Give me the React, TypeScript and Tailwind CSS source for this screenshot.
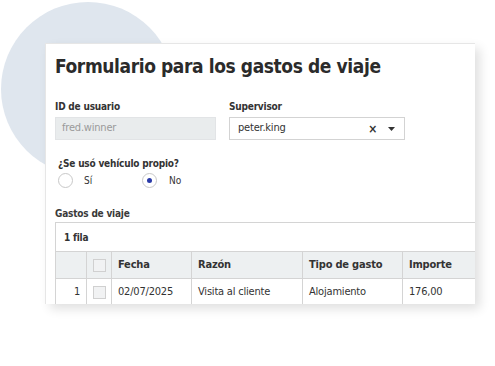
import React from "react";

const F = { fontFamily: '"DejaVu Sans Condensed", "DejaVu Sans", sans-serif' };

function Check() {
  return <div className="w-[13px] h-[13px] border border-[#d0d0d0] bg-[#f1f2f3]" />;
}

function Radio({ on }: { on?: boolean }) {
  return (
    <div className="w-[15px] h-[15px] rounded-full border border-[#c8c8c8] bg-white flex items-center justify-center">
      {on && <div className="w-[5px] h-[5px] rounded-full bg-[#2a3aa8]" />}
    </div>
  );
}

const cell = "border-r border-[#d4d4d4] flex items-center pl-[6px]";

export default function App() {
  return (
    <div className="relative w-[495px] h-[366px] bg-white overflow-hidden text-[#333] font-stretch-condensed" style={F}>
      <div className="absolute left-[1px] top-[2px] w-[174px] h-[174px] rounded-full bg-[#dfe6ee]" />
      <div className="relative ml-[45px] mt-[43px] w-[430px] h-[261px] bg-white border-t border-l border-[#e6e6e6] shadow-[5px_5px_10px_rgba(0,0,0,0.12)] overflow-hidden">
        <div className="pl-[9px] pt-[10px]">
          <h1 className="text-[19px] leading-[24px] font-bold text-[#2b2b2b] tracking-[-0.4px]">
            Formulario para los gastos de viaje
          </h1>
          <div className="flex gap-[13px] mt-[22px]">
            <div className="flex flex-col w-[161px]">
              <div className="text-[10px] leading-[13px] font-bold tracking-[-0.2px]">ID de usuario</div>
              <div className="mt-[4px] h-[23px] bg-[#e9eced] border border-[#e2e4e6] px-[6px] flex items-center text-[11px] tracking-[-0.2px] text-[#9a9a9a]">
                fred.winner
              </div>
            </div>
            <div className="flex flex-col w-[176px]">
              <div className="text-[10px] leading-[13px] font-bold tracking-[-0.2px]">Supervisor</div>
              <div className="mt-[4px] h-[23px] bg-white border border-[#d3d3d3] pl-[8px] pr-[9px] flex items-center text-[11px] tracking-[-0.2px] text-[#333]">
                <span className="flex-1">peter.king</span>
                <span className="text-[12px] font-bold mr-[11px] leading-none">×</span>
                <svg width="7" height="4" viewBox="0 0 7 4"><path d="M0 0h7L3.5 4z" fill="#333" /></svg>
              </div>
            </div>
          </div>
          <div className="ml-[3px] mt-[17px] text-[10px] leading-[13px] font-bold tracking-[-0.2px]">¿Se usó vehículo propio?</div>
          <div className="ml-[3px] mt-[3px] flex items-center text-[10px]">
            <Radio />
            <span className="ml-[11px] w-[58px]">Sí</span>
            <Radio on />
            <span className="ml-[12px]">No</span>
          </div>
          <div className="mt-[19px] text-[10px] leading-[13px] font-bold tracking-[-0.2px] text-[#3a3a3a]">Gastos de viaje</div>
          <div className="mt-[2px] border-t border-l border-[#d4d4d4] text-[11px] tracking-[-0.2px]">
            <div className="h-[28px] flex items-center pl-[8px] font-bold text-[10px]">1 fila</div>
            <div className="flex h-[27px] bg-[#edf0f1] border-t border-[#d4d4d4] font-bold">
              <div className="w-[31px] border-r border-[#d4d4d4]" />
              <div className="w-[25px] border-r border-[#d4d4d4] flex items-center justify-center"><Check /></div>
              <div className={`w-[80px] ${cell}`}>Fecha</div>
              <div className={`w-[111px] ${cell}`}>Razón</div>
              <div className={`w-[100px] ${cell}`}>Tipo de gasto</div>
              <div className="flex-1 flex items-center pl-[6px]">Importe</div>
            </div>
            <div className="flex h-[27px] border-t border-[#d4d4d4]">
              <div className="w-[31px] border-r border-[#d4d4d4] flex items-center justify-end pr-[6px]">1</div>
              <div className="w-[25px] border-r border-[#d4d4d4] flex items-center justify-center"><Check /></div>
              <div className={`w-[80px] ${cell}`}>02/07/2025</div>
              <div className={`w-[111px] ${cell}`}>Visita al cliente</div>
              <div className={`w-[100px] ${cell}`}>Alojamiento</div>
              <div className="flex-1 flex items-center pl-[6px]">176,00</div>
            </div>
          </div>
        </div>
      </div>
    </div>
  );
}
